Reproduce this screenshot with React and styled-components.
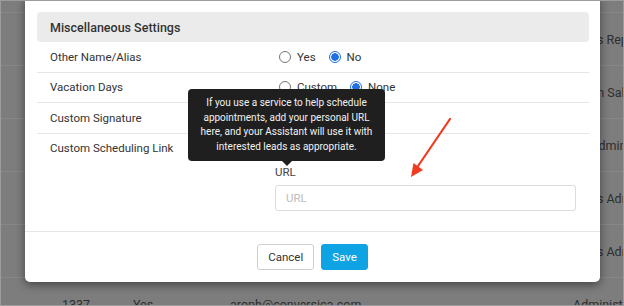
import React from 'react';
import styled, { createGlobalStyle } from 'styled-components';

const GlobalStyle = createGlobalStyle`
    * { box-sizing: border-box; }
    body {
        margin: 0;
        font-family: Roboto, "Liberation Sans", Arial, sans-serif;
        background: #7d7d7d;
    }
`;

const bgRows = [
    { id: '', flag: '', email: '', role: 'Sales Rep' },
    { id: '', flag: '', email: '', role: 'Team Sales' },
    { id: '', flag: '', email: '', role: 'Sr. Admin' },
    { id: '', flag: '', email: '', role: 'Sales Admin' },
    { id: '', flag: '', email: '', role: 'Sales Admin' },
    { id: '1337', flag: 'Yes', email: 'aroph@conversica.com', role: 'Administrator' },
];

const App = () => (
    <>
        <GlobalStyle />
        <Frame>
            {/* dimmed user table behind the dialog */}
            <BgTable>
                {bgRows.map((row, i) => (
                    <BgRow key={i}>
                        <BgCell>{row.id}</BgCell>
                        <BgCell>{row.flag}</BgCell>
                        <BgCell>{row.email}</BgCell>
                        <BgCell>{row.role}</BgCell>
                    </BgRow>
                ))}
            </BgTable>

            <Modal>
                <Body>
                    <SectionHeader>Miscellaneous Settings</SectionHeader>

                    <Row>
                        <Label>Other Name/Alias</Label>
                        <Options>
                            <Radio><Dot /> Yes</Radio>
                            <Radio><Dot checked /> No</Radio>
                        </Options>
                    </Row>
                    <Row>
                        <Label>Vacation Days</Label>
                        <Options>
                            <Radio><Dot /> Custom</Radio>
                            <Radio><Dot checked /> None</Radio>
                        </Options>
                    </Row>
                    <Row>
                        <Label>Custom Signature</Label>
                        <Options />
                    </Row>
                    <Row last>
                        <Label>Custom Scheduling Link</Label>
                        <Field>
                            <Spacer />
                            <FieldLabel>URL</FieldLabel>
                            <Input placeholder="URL" />
                        </Field>
                    </Row>
                </Body>

                <Footer>
                    <Button>Cancel</Button>
                    <Button primary>Save</Button>
                </Footer>

                <Tooltip>
                    If you use a service to help schedule appointments, add your personal URL
                    here, and your Assistant will use it with interested leads as appropriate.
                </Tooltip>
            </Modal>

            <Arrow width="50" height="66" viewBox="0 0 50 66">
                <line x1="43" y1="2" x2="9" y2="52" stroke="#ef3b1f" strokeWidth="2.2" strokeLinecap="round" />
                <polygon points="4,60 6.5,46 16,53" fill="#ef3b1f" />
            </Arrow>
        </Frame>
    </>
);

const Frame = styled.div`
    position: relative;
    width: 624px;
    height: 306px;
    overflow: hidden;
    background: #7d7d7d;
    border: 1px solid #9c9c9c;
`;

const BgTable = styled.div`
    padding-top: 11px;
`;

const BgRow = styled.div`
    display: grid;
    grid-template-columns: 71px 97px 343px 1fr;
    align-items: center;
    height: 53px;
    padding-left: 61px;
    border-top: 1px solid #878787;
`;

const BgCell = styled.div`
    font-size: 12.5px;
    color: #2e2e2e;
    white-space: nowrap;
`;

const Modal = styled.div`
    position: absolute;
    left: 24px;
    top: -6px;
    width: 575px;
    background: #fff;
    border-radius: 5px;
    box-shadow: 0 3px 10px rgba(0, 0, 0, 0.45);
`;

const Body = styled.div`
    padding: 17px 11px 0 12px;
    border-bottom: 1px solid #e6e6e6;
`;

const SectionHeader = styled.div`
    height: 30px;
    display: flex;
    align-items: center;
    padding-left: 13px;
    background: #ebebeb;
    border-radius: 4px;
    font-size: 12.5px;
    font-weight: 500;
    color: #333;
`;

const Row = styled.div`
    display: grid;
    grid-template-columns: 225px 1fr;
    align-items: ${(p) => (p.last ? 'start' : 'center')};
    height: ${(p) => (p.last ? 'auto' : '30.5px')};
    padding: ${(p) => (p.last ? '6px 13px 20px' : '0 13px')};
    border-bottom: ${(p) => (p.last ? 'none' : '1px solid #e6e6e6')};
`;

const Label = styled.div`
    font-size: 11.5px;
    color: #333;
    line-height: 16px;
`;

const Options = styled.div`
    display: flex;
    align-items: center;
    gap: 13px;
    padding-left: 4px;
`;

const Radio = styled.label`
    display: flex;
    align-items: center;
    gap: 6px;
    font-size: 11.5px;
    color: #333;
`;

const Dot = styled.span`
    width: 12px;
    height: 12px;
    border-radius: 50%;
    border: 1px solid ${(p) => (p.checked ? '#1f6fe5' : '#777')};
    background: ${(p) => (p.checked ? 'radial-gradient(circle, #1f6fe5 0 3.5px, #fff 4px)' : '#fff')};
    ${(p) => p.checked && 'border-width: 1.5px;'}
`;

const Field = styled.div`
    display: flex;
    flex-direction: column;
`;

const Spacer = styled.div`
    height: 16px;
`;

const FieldLabel = styled.div`
    margin-top: 9px;
    font-size: 11.5px;
    color: #444;
    line-height: 14px;
`;

const Input = styled.input`
    margin-top: 6px;
    height: 26px;
    border: 1px solid #dcdcdc;
    border-radius: 3px;
    padding: 0 10px;
    font: inherit;
    font-size: 11.5px;
    &::placeholder { color: #bdbdbd; }
`;

const Footer = styled.div`
    display: flex;
    justify-content: center;
    gap: 7px;
    padding: 12px 0 12px;
`;

const Button = styled.button`
    height: 26px;
    padding: 0 10px;
    border-radius: 3px;
    border: 1px solid ${(p) => (p.primary ? '#0ea3e2' : '#cfcfcf')};
    background: ${(p) => (p.primary ? '#0ea3e2' : '#fff')};
    color: ${(p) => (p.primary ? '#fff' : '#333')};
    font-family: Roboto, "Liberation Sans", Arial, sans-serif;
    font-size: 11.5px;
`;

const Tooltip = styled.div`
    position: absolute;
    left: 163px;
    top: 94px;
    width: 197px;
    padding: 7px 8px 7px;
    background: #1f1f1f;
    border-radius: 4px;
    color: #f2f2f2;
    font-size: 10px;
    line-height: 14.5px;
    text-align: center;

    &::after {
        content: '';
        position: absolute;
        left: 94px;
        bottom: -5px;
        border: 5px solid transparent;
        border-bottom: none;
        border-top-color: #1f1f1f;
    }
`;

const Arrow = styled.svg`
    position: absolute;
    left: 406px;
    top: 116px;
`;

export default App;
